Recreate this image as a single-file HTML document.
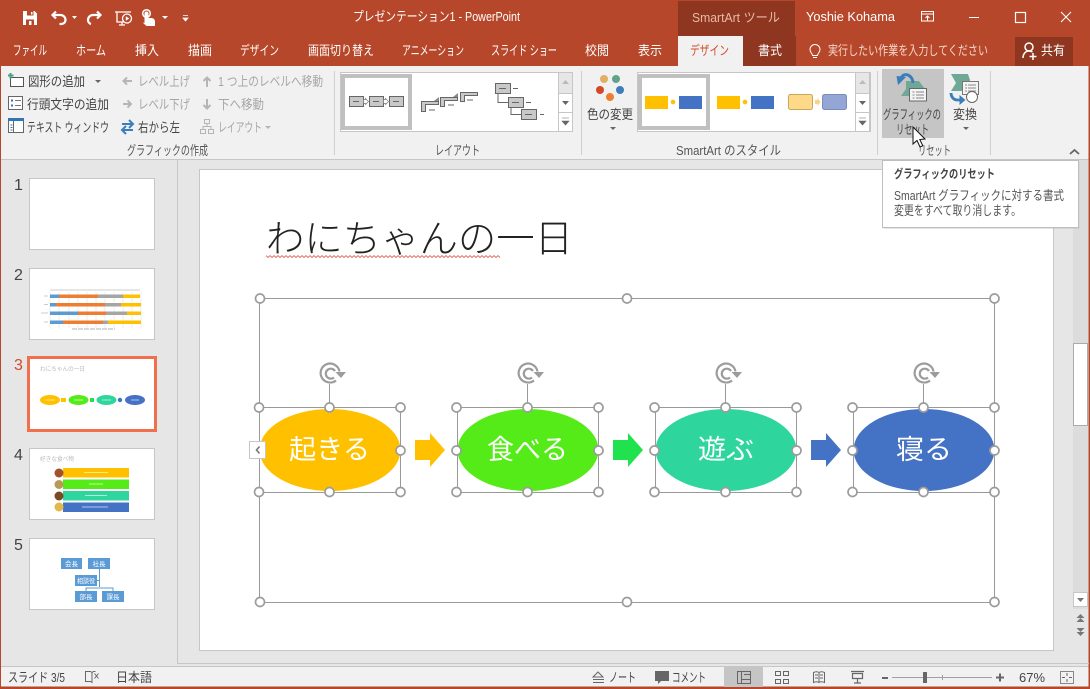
<!DOCTYPE html>
<html lang="ja"><head><meta charset="utf-8"><title>PowerPoint</title>
<style>
html,body{margin:0;padding:0;background:#E6E6E6;width:1090px;height:689px;overflow:hidden}
svg{display:block;position:absolute;left:0;top:0}
text{font-family:"Liberation Sans","Noto Sans CJK JP",sans-serif;font-size:13px;fill:#444}
.t{fill:#fff}
.d{fill:#A6A6A6}
.h{fill:none;stroke:#999;stroke-width:1}
.hd{fill:#fff;stroke:#9C9C9C;stroke-width:1.700}
.ic{fill:none;stroke:#fff;stroke-width:2}
.sl{fill:#fff;font-size:27px}
</style></head><body>
<svg width="1090" height="689" viewBox="0 0 1090 689" xmlns="http://www.w3.org/2000/svg">
<defs>
<pattern id="wavy" x="266" y="255" width="4" height="3" patternUnits="userSpaceOnUse"><path d="M0 .5L2 2.500 4 .5" fill="none" stroke="#E0504A" stroke-width=".8"/></pattern>
</defs>
<!-- window -->
<rect width="1090" height="689" fill="#B7472A"/>
<rect x="1" y="66" width="1087.500" height="94" fill="#F1F1F1"/>
<rect x="1" y="160" width="1087.500" height="506" fill="#E6E6E6"/>
<rect x="1" y="159" width="1087.500" height="1" fill="#C6C6C6"/>
<rect x="1" y="666" width="1087.500" height="20.500" fill="#F1F1F1"/>
<rect x="1" y="666" width="1087.500" height="1" fill="#C6C6C6"/>
<rect x="177" y="160" width="1" height="504" fill="#C6C6C6"/>
<rect x="177" y="663" width="912" height="1" fill="#C6C6C6"/>

<!-- title bar: quick access -->
<path d="M23 11h11.500l2.500 2.500V25H23z" fill="#fff"/>
<rect x="27" y="11" width="6.500" height="4.500" fill="#B7472A"/><rect x="31" y="12" width="1.500" height="2.500" fill="#fff"/>
<rect x="26" y="19.500" width="8" height="5.500" fill="#B7472A"/><rect x="29" y="21" width="2.500" height="4" fill="#fff"/>
<path d="M56 11.500l-3.500 3.500 3.500 3.500M52.500 15h8a5 5 0 0 1 5 5v0a4 4 0 0 1-4 4h-2" class="ic" style="stroke-width:2.200"/>
<path d="M72 16h5l-2.500 3z" fill="#fff"/>
<path d="M97 11.500l3.500 3.500-3.500 3.500M100 15h-7a5 5 0 0 0-5 5v0a4 4 0 0 0 3 4" class="ic" style="stroke-width:2.200"/>
<path d="M115 12h16M117 12v10h7M122 22v3M119 25h6" fill="none" stroke="#fff" stroke-width="1.300"/>
<circle cx="127" cy="18.500" r="4.500" fill="#B7472A" stroke="#fff" stroke-width="1.300"/>
<path d="M125.800 16.200l3.500 2.300-3.500 2.300z" fill="#fff"/>
<path d="M144.500 23v-9.500a2 2 0 0 1 4 0v4.500h3a3.500 3.500 0 0 1 3.500 3.500v4.500h-8.500l-4-3.500z" fill="#fff"/>
<circle cx="146.500" cy="13.500" r="3.800" fill="none" stroke="#fff" stroke-width="1.500"/>
<path d="M162 16h6l-3 3z" fill="#fff"/>
<path d="M183 15.500h5M183 18h5l-2.500 3z" fill="#fff" stroke="#fff" stroke-width=".8"/>
<text x="353" y="21" class="t" textLength="167" lengthAdjust="spacingAndGlyphs" style="font-size:13px">プレゼンテーション1 - PowerPoint</text>

<!-- contextual header -->
<rect x="678" y="1" width="117" height="35" fill="#8F3620"/>
<text x="692" y="22" textLength="88" lengthAdjust="spacingAndGlyphs" style="fill:#E9B9A6">SmartArt ツール</text>
<text x="806" y="21" class="t" textLength="89" lengthAdjust="spacingAndGlyphs">Yoshie Kohama</text>
<!-- window controls -->
<rect x="921.500" y="11.500" width="12" height="9.500" fill="none" stroke="#fff"/>
<path d="M921.500 14h12M927.500 20.500v-4M925.500 18l2-2 2 2" fill="none" stroke="#fff"/>
<rect x="969" y="17" width="10" height="1" fill="#fff"/>
<rect x="1015.500" y="12.500" width="10" height="10" fill="none" stroke="#fff" stroke-width="1.200"/>
<path d="M1061 12l10 10M1071 12l-10 10" fill="none" stroke="#fff" stroke-width="1.100"/>

<!-- tabs -->
<rect x="678" y="36" width="65" height="30" fill="#F1F1F1"/>
<rect x="743" y="36" width="53" height="30" fill="#8F3620"/>
<rect x="1015" y="37" width="58" height="29" fill="#8F3620"/>
<g>
<text x="13" y="55" class="t" textLength="34" lengthAdjust="spacingAndGlyphs">ファイル</text>
<text x="76" y="55" class="t" textLength="30" lengthAdjust="spacingAndGlyphs">ホーム</text>
<text x="135" y="55" class="t" textLength="24" lengthAdjust="spacingAndGlyphs">挿入</text>
<text x="188" y="55" class="t" textLength="24" lengthAdjust="spacingAndGlyphs">描画</text>
<text x="240" y="55" class="t" textLength="39" lengthAdjust="spacingAndGlyphs">デザイン</text>
<text x="308" y="55" class="t" textLength="66" lengthAdjust="spacingAndGlyphs">画面切り替え</text>
<text x="402" y="55" class="t" textLength="62" lengthAdjust="spacingAndGlyphs">アニメーション</text>
<text x="491" y="55" class="t" textLength="66" lengthAdjust="spacingAndGlyphs">スライド ショー</text>
<text x="585" y="55" class="t" textLength="24" lengthAdjust="spacingAndGlyphs">校閲</text>
<text x="638" y="55" class="t" textLength="24" lengthAdjust="spacingAndGlyphs">表示</text>
<text x="690" y="55" textLength="39" lengthAdjust="spacingAndGlyphs" style="fill:#D2492A">デザイン</text>
<text x="758" y="55" class="t" textLength="24" lengthAdjust="spacingAndGlyphs">書式</text>
<text x="828" y="55" textLength="160" lengthAdjust="spacingAndGlyphs" style="fill:#F4D7CB">実行したい作業を入力してください</text>
<text x="1041" y="55" class="t" textLength="24" lengthAdjust="spacingAndGlyphs">共有</text>
</g>
<!-- bulb -->
<path d="M812.500 55.500c0-2-2.500-3-2.500-6a5 5 0 0 1 10 0c0 3-2.500 4-2.500 6zM813 57.500h4" fill="none" stroke="#fff" stroke-width="1"/>
<!-- share icon -->
<circle cx="1029" cy="47" r="4" fill="none" stroke="#fff" stroke-width="1.500"/>
<path d="M1023 58c0-4 2.500-7 6-7 1.500 0 2.500.5 3.500 1M1033 53v7M1029.500 56.500h7" fill="none" stroke="#fff" stroke-width="1.500"/>

<!-- ribbon: group 1 -->
<rect x="10.500" y="77.500" width="13" height="9" fill="#fff" stroke="#555"/>
<path d="M10.500 73v5.500M8 75.500h5.500" stroke="#4E9E83" stroke-width="2" fill="none"/>
<text x="28" y="86" textLength="57" lengthAdjust="spacingAndGlyphs">図形の追加</text>
<path d="M95 80h6l-3 3z" fill="#666"/>
<rect x="8.500" y="96.500" width="14" height="13" fill="#fff" stroke="#666"/>
<path d="M11 100.500h2M11 105.500h2" stroke="#2E75B6" stroke-width="2"/><path d="M15 100.500h6M15 105.500h6" stroke="#777"/>
<text x="27" y="109" textLength="82" lengthAdjust="spacingAndGlyphs">行頭文字の追加</text>
<rect x="8.500" y="119.500" width="15" height="13" fill="#fff" stroke="#666"/>
<rect x="8" y="118" width="16" height="3" fill="#2E75B6"/>
<path d="M13.500 121v11" stroke="#666"/><path d="M10.500 125h2M10.500 127.500h2M10.500 130h2" stroke="#2E75B6"/>
<text x="27" y="132" textLength="82" lengthAdjust="spacingAndGlyphs">テキスト ウィンドウ</text>

<path d="M132 81h-8M127 77.500l-3.500 3.500 3.500 3.500" fill="none" stroke="#B5B5B5" stroke-width="2"/>
<text x="138" y="86" class="d" textLength="52" lengthAdjust="spacingAndGlyphs">レベル上げ</text>
<path d="M207 87v-9M203.500 81l3.500-3.500 3.500 3.500" fill="none" stroke="#B5B5B5" stroke-width="2"/>
<text x="218" y="86" class="d" textLength="105" lengthAdjust="spacingAndGlyphs">1 つ上のレベルへ移動</text>
<path d="M123 104h8M127.500 100.500l3.500 3.500-3.500 3.500" fill="none" stroke="#B5B5B5" stroke-width="2"/>
<text x="138" y="109" class="d" textLength="52" lengthAdjust="spacingAndGlyphs">レベル下げ</text>
<path d="M207 99v9M203.500 105l3.500 3.500 3.500-3.500" fill="none" stroke="#B5B5B5" stroke-width="2"/>
<text x="218" y="109" class="d" textLength="46" lengthAdjust="spacingAndGlyphs">下へ移動</text>
<path d="M122 124h11M129 120l4 4-4 4" fill="none" stroke="#3C7DBB" stroke-width="2"/>
<path d="M133 130h-11M126 126l-4 4 4 4" fill="none" stroke="#3C7DBB" stroke-width="2"/>
<text x="138" y="132" textLength="42" lengthAdjust="spacingAndGlyphs">右から左</text>
<path d="M204.500 119.500h5v4h-5zM200.500 129.500h5v4h-5zM208.500 129.500h5v4h-5zM207 123.500v3M203 129.500v-3h8v3" fill="none" stroke="#B5B5B5"/>
<text x="218" y="132" class="d" textLength="44" lengthAdjust="spacingAndGlyphs">レイアウト</text>
<path d="M265 126h6l-3 3z" fill="#B5B5B5"/>
<text x="127" y="155" textLength="81" lengthAdjust="spacingAndGlyphs" style="fill:#555">グラフィックの作成</text>
<rect x="334" y="71" width="1" height="84" fill="#D0D0D0"/>

<!-- layout gallery -->
<rect x="340.500" y="72.500" width="232" height="59" fill="#fff" stroke="#C6C6C6"/>
<rect x="343" y="76" width="67" height="52" fill="#fff" stroke="#C0C0C0" stroke-width="4"/>
<g fill="#C8C8C8" stroke="#666">
<rect x="349.500" y="96.500" width="14" height="10"/><rect x="369.500" y="96.500" width="14" height="10"/><rect x="389.500" y="96.500" width="14" height="10"/>
</g>
<path d="M353 101.500h6M373 101.500h6M393 101.500h6" stroke="#666"/>
<path d="M363.500 99.500h2v-1l3 3-3 3v-1h-2zM383.500 99.500h2v-1l3 3-3 3v-1h-2z" fill="#fff" stroke="#777" stroke-width=".7"/>
<path d="M421.500 101.500h17v3h-13v7h-4zM440.500 97.500h17v3h-13v6h-4zM460.500 92.500h17v3h-13v6h-4z" fill="#C8C8C8" stroke="#666"/>
<path d="M429 110h6M448 105h6M467 100h6" stroke="#666"/>
<path d="M434 101l5-4v4zM453 97l5-4v4z" fill="#888"/>
<g fill="#C8C8C8" stroke="#666">
<rect x="495.500" y="83.500" width="15" height="10"/><rect x="508.500" y="97.500" width="15" height="10"/><rect x="521.500" y="109.500" width="15" height="10"/>
</g>
<path d="M499 88.500h7M512 102.500h7M525 114.500h7M513 88.500h5M526 102.500h5M540 114.500h4M498 93.500v9h10M511 107.500v7h10" stroke="#666" fill="none"/>
<path d="M558.500 72.500h14v59h-14zM558.500 93.500h14M558.500 112.500h14" fill="#fff" stroke="#C6C6C6"/>
<rect x="559" y="73" width="13" height="20" fill="#E6E6E6"/>
<path d="M562 84l3.500-4 3.500 4z" fill="#BBB"/>
<path d="M562 101h7l-3.500 4z" fill="#666"/>
<path d="M562 118h7M562 121h7l-3.500 4z" fill="#666" stroke="#666" stroke-width=".6"/>
<text x="435" y="155" textLength="45" lengthAdjust="spacingAndGlyphs" style="fill:#555">レイアウト</text>
<rect x="581" y="71" width="1" height="84" fill="#D0D0D0"/>

<!-- colour change -->
<circle cx="604" cy="79" r="4" fill="#E3AE63"/><circle cx="616" cy="79" r="4" fill="#5FA48A"/>
<circle cx="600" cy="90" r="4" fill="#D2492A"/><circle cx="620" cy="90" r="4" fill="#3C7DBB"/><circle cx="610" cy="97" r="4" fill="#ED7D31"/>
<text x="587" y="119" textLength="46" lengthAdjust="spacingAndGlyphs">色の変更</text>
<path d="M610 127h6l-3 3z" fill="#666"/>

<!-- style gallery -->
<rect x="637.500" y="72.500" width="233" height="59" fill="#fff" stroke="#C6C6C6"/>
<rect x="640" y="76" width="68" height="52" fill="#fff" stroke="#C0C0C0" stroke-width="4"/>
<rect x="645" y="96" width="23" height="13" fill="#FFC000"/><circle cx="673" cy="102" r="2.300" fill="#FFC000"/><rect x="679" y="96" width="23" height="13" fill="#4472C4"/>
<rect x="717" y="96" width="23" height="13" fill="#FFC000"/><circle cx="745" cy="102" r="2.300" fill="#FFC000"/><rect x="751" y="96" width="23" height="13" fill="#4472C4"/>
<rect x="788.500" y="94.500" width="24" height="15" rx="2" fill="#FFD98A" stroke="#C9A65A"/><path d="M815 100h2.500v-2l3 4-3 4v-2H815z" fill="#F8D18A"/><rect x="822.500" y="94.500" width="24" height="15" rx="2" fill="#93A6D6" stroke="#7C8DB8"/>
<path d="M855.500 72.500h14v59h-14zM855.500 93.500h14M855.500 112.500h14" fill="#fff" stroke="#C6C6C6"/>
<rect x="856" y="73" width="13" height="20" fill="#E6E6E6"/>
<path d="M859 84l3.500-4 3.500 4z" fill="#BBB"/>
<path d="M859 101h7l-3.500 4z" fill="#666"/>
<path d="M859 118h7M859 121h7l-3.500 4z" fill="#666" stroke="#666" stroke-width=".6"/>
<text x="676" y="155" textLength="105" lengthAdjust="spacingAndGlyphs" style="fill:#555">SmartArt のスタイル</text>
<rect x="877" y="71" width="1" height="84" fill="#D0D0D0"/>

<!-- reset -->
<rect x="882" y="69" width="62" height="69" fill="#C5C5C5"/>
<path d="M906 81h13l6 8v7h-24l5-7z" fill="#6FA897"/>
<path d="M913 83C913 76 905 71 901 78" fill="none" stroke="#3C7DBB" stroke-width="3"/>
<path d="M896.500 76l9.500 1-8 8z" fill="#3C7DBB"/>
<rect x="909.500" y="88.500" width="17" height="12.500" fill="#F4F4F4" stroke="#666"/>
<path d="M912.500 92h2M916 92h8M912.500 95h2M916 95h8M912.500 98h2M916 98h8" stroke="#888"/>
<text x="883" y="119" textLength="58" lengthAdjust="spacingAndGlyphs">グラフィックの</text>
<text x="896" y="134" textLength="33" lengthAdjust="spacingAndGlyphs">リセット</text>
<path d="M951 74h17l2 6v11h-19l5-8z" fill="#6FA897"/>
<rect x="962.500" y="81.500" width="16" height="13" fill="#F4F4F4" stroke="#777"/>
<path d="M965 85h2M968 85h8M965 88h2M968 88h8M965 91h2M968 91h8" stroke="#888"/>
<path d="M951 93a6 7 0 0 0 6 7h5" fill="none" stroke="#3C7DBB" stroke-width="2.800"/>
<path d="M959.500 95l6 5-6 5z" fill="#3C7DBB"/>
<circle cx="972" cy="97" r="5.500" fill="#fff" stroke="#666"/>
<text x="953" y="119" textLength="24" lengthAdjust="spacingAndGlyphs">変換</text>
<path d="M963 127h6l-3 3z" fill="#666"/>
<text x="918" y="155" textLength="33" lengthAdjust="spacingAndGlyphs" style="fill:#555">リセット</text>
<rect x="990" y="71" width="1" height="84" fill="#D0D0D0"/>
<path d="M1070 154l4.500-4 4.500 4" fill="none" stroke="#666" stroke-width="1.800"/>

<!-- thumbnails -->
<text x="14" y="190" style="font-size:16px">1</text>
<text x="14" y="280" style="font-size:16px">2</text>
<text x="14" y="370" style="font-size:16px;fill:#D2492A">3</text>
<text x="14" y="460" style="font-size:16px">4</text>
<text x="14" y="550" style="font-size:16px">5</text>
<rect x="29.500" y="178.500" width="125" height="71" fill="#fff" stroke="#C6C6C6"/>
<rect x="29.500" y="268.500" width="125" height="71" fill="#fff" stroke="#C6C6C6"/>
<path d="M50 292v36M59 292v36M69 292v36M78 292v36M87 292v36M96 292v36M105 292v36M114 292v36M123 292v36M132 292v36M141 292v36" stroke="#DDD" stroke-width=".5"/>
<rect x="50" y="294.500" width="9" height="3.500" fill="#5B9BD5"/><rect x="59" y="294.500" width="39" height="3.500" fill="#ED7D31"/><rect x="98" y="294.500" width="25" height="3.500" fill="#A5A5A5"/><rect x="123" y="294.500" width="17" height="3.500" fill="#FFC000"/>
<rect x="50" y="303" width="6" height="3.500" fill="#5B9BD5"/><rect x="56" y="303" width="49" height="3.500" fill="#ED7D31"/><rect x="105" y="303" width="16" height="3.500" fill="#A5A5A5"/><rect x="121" y="303" width="20" height="3.500" fill="#FFC000"/>
<rect x="50" y="311.500" width="28" height="3.500" fill="#5B9BD5"/><rect x="78" y="311.500" width="28" height="3.500" fill="#ED7D31"/><rect x="106" y="311.500" width="21" height="3.500" fill="#A5A5A5"/><rect x="127" y="311.500" width="14" height="3.500" fill="#FFC000"/>
<rect x="50" y="320.500" width="13" height="3.500" fill="#5B9BD5"/><rect x="63" y="320.500" width="40" height="3.500" fill="#ED7D31"/><rect x="103" y="320.500" width="5" height="3.500" fill="#A5A5A5"/><rect x="108" y="320.500" width="33" height="3.500" fill="#FFC000"/>
<path d="M72 329h43" stroke="#CCC" stroke-width="1.500" stroke-dasharray="5 1"/>
<path d="M44 296h4M44 304.500h4M41 313h7M44 322h4M50 290h90" stroke="#CCC" stroke-width="1"/>

<rect x="28.500" y="357.500" width="127" height="73" fill="#fff" stroke="#F0704E" stroke-width="3"/>
<text x="40" y="371" textLength="45" lengthAdjust="spacingAndGlyphs" style="font-size:6px;fill:#BBB">わにちゃんの一日</text>
<ellipse cx="50" cy="400" rx="10" ry="5" fill="#FFC000"/><rect x="61" y="398" width="5" height="4" fill="#FFC000"/>
<ellipse cx="78.500" cy="400" rx="10" ry="5" fill="#55EB18"/><rect x="90" y="398" width="4" height="4" fill="#1FE24E"/>
<ellipse cx="106.500" cy="400" rx="10" ry="5" fill="#2ED69E"/><circle cx="120" cy="400" r="2.200" fill="#4472C4"/>
<ellipse cx="135" cy="400" rx="10" ry="5" fill="#4472C4"/>
<path d="M45 400h10M74 400h9M102 400h9M131 400h8" stroke="#fff" stroke-width="1" opacity=".6"/>

<rect x="29.500" y="448.500" width="125" height="71" fill="#fff" stroke="#C6C6C6"/>
<text x="40" y="461" textLength="34" lengthAdjust="spacingAndGlyphs" style="font-size:6px;fill:#BBB">好きな食べ物</text>
<rect x="63" y="468" width="66" height="9.500" fill="#FFC000"/><rect x="63" y="479.500" width="66" height="9.500" fill="#55EB18"/><rect x="63" y="491" width="66" height="9.500" fill="#2ED69E"/><rect x="63" y="502.500" width="66" height="9.500" fill="#4472C4"/>
<circle cx="59" cy="473" r="4.500" fill="#A0522D"/><circle cx="59" cy="484.500" r="4.500" fill="#B79A5A"/><circle cx="59" cy="496" r="4.500" fill="#7A4A22"/><circle cx="59" cy="507" r="4.500" fill="#E0B94A"/>
<path d="M84 472.500h24M89 484h14M85 495.500h22M82 507h26" stroke="#fff" stroke-width="1" opacity=".6"/>

<rect x="29.500" y="538.500" width="125" height="71" fill="#fff" stroke="#C6C6C6"/>
<rect x="61" y="558" width="21" height="11" fill="#5B9BD5"/><rect x="88" y="558" width="22" height="11" fill="#5B9BD5"/><rect x="75" y="575" width="22" height="11" fill="#5B9BD5"/><rect x="75" y="591" width="22" height="11" fill="#5B9BD5"/><rect x="102" y="591" width="22" height="11" fill="#5B9BD5"/>
<path d="M99.500 569v18M97 580.500h2M86 591v-3h27v3" fill="none" stroke="#5B9BD5"/>
<text x="65" y="566" textLength="13" lengthAdjust="spacingAndGlyphs" style="font-size:6.500px;fill:#fff">会長</text>
<text x="92.500" y="566" textLength="13" lengthAdjust="spacingAndGlyphs" style="font-size:6.500px;fill:#fff">社長</text>
<text x="77" y="583" textLength="18" lengthAdjust="spacingAndGlyphs" style="font-size:6.500px;fill:#fff">相談役</text>
<text x="79.500" y="599" textLength="13" lengthAdjust="spacingAndGlyphs" style="font-size:6.500px;fill:#fff">部長</text>
<text x="106.500" y="599" textLength="13" lengthAdjust="spacingAndGlyphs" style="font-size:6.500px;fill:#fff">課長</text>

<!-- slide -->
<rect x="199.500" y="169.500" width="854" height="481" fill="#fff" stroke="#C6C6C6"/>
<text x="266" y="252" textLength="307" lengthAdjust="spacingAndGlyphs" style="font-size:38px;fill:#222;font-weight:300">わにちゃんの一日</text>
<rect x="266" y="255" width="234" height="3" fill="url(#wavy)"/>

<!-- smartart frame -->
<rect x="259.500" y="298.500" width="735" height="304" class="h"/>
<!-- shapes -->
<ellipse cx="330" cy="450" rx="70.500" ry="41" fill="#FFC000"/>
<ellipse cx="528" cy="450" rx="70.500" ry="41" fill="#55EB18"/>
<ellipse cx="726" cy="450" rx="70.500" ry="41" fill="#2ED69E"/>
<ellipse cx="924" cy="450" rx="70.500" ry="41" fill="#4472C4"/>
<path d="M415 440h15v-7l15 17-15 17v-7h-15z" fill="#FFC000"/>
<path d="M613 440h15v-7l15 17-15 17v-7h-15z" fill="#1FE24E"/>
<path d="M811 440h15v-7l15 17-15 17v-7h-15z" fill="#4472C4"/>
<text x="289" y="459" class="sl" textLength="81" lengthAdjust="spacingAndGlyphs">起きる</text>
<text x="487" y="459" class="sl" textLength="81" lengthAdjust="spacingAndGlyphs">食べる</text>
<text x="698" y="459" class="sl" textLength="56" lengthAdjust="spacingAndGlyphs">遊ぶ</text>
<text x="896" y="459" class="sl" textLength="56" lengthAdjust="spacingAndGlyphs">寝る</text>
<!-- selection boxes -->
<rect x="259.500" y="407.500" width="141" height="85" class="h"/>
<rect x="457.500" y="407.500" width="141" height="85" class="h"/>
<rect x="655.500" y="407.500" width="141" height="85" class="h"/>
<rect x="853.500" y="407.500" width="141" height="85" class="h"/>
<path d="M329.500 384v23M527.500 384v23M725.500 384v23M923.500 384v23" stroke="#999" stroke-width="1"/>
<!-- rotate handles -->
<g fill="none" stroke="#9C9C9C" stroke-width="2.200">
<path d="M336 380.500A9.500 9.500 0 1 1 339.500 371.500"/><path d="M334 377.500A5 5 0 1 1 335 371"/>
<path d="M534 380.500A9.500 9.500 0 1 1 537.500 371.500"/><path d="M532 377.500A5 5 0 1 1 533 371"/>
<path d="M732 380.500A9.500 9.500 0 1 1 735.500 371.500"/><path d="M730 377.500A5 5 0 1 1 731 371"/>
<path d="M930 380.500A9.500 9.500 0 1 1 933.500 371.500"/><path d="M928 377.500A5 5 0 1 1 929 371"/>
</g>
<path d="M335.500 372h10.500l-5 6zM533.500 372h10.500l-5 6zM731.500 372h10.500l-5 6zM929.500 372h10.500l-5 6z" fill="#9C9C9C"/>
<!-- handles -->
<g class="hd">
<circle cx="260" cy="298.500" r="4.500"/><circle cx="627" cy="298.500" r="4.500"/><circle cx="994.500" cy="298.500" r="4.500"/>
<circle cx="260" cy="602" r="4.500"/><circle cx="627" cy="602" r="4.500"/><circle cx="994.500" cy="602" r="4.500"/>
<circle cx="259" cy="407.500" r="4.500"/><circle cx="329.500" cy="407.500" r="4.500"/><circle cx="400.500" cy="407.500" r="4.500"/>
<circle cx="400.500" cy="450.500" r="4.500"/>
<circle cx="259" cy="492" r="4.500"/><circle cx="329.500" cy="492" r="4.500"/><circle cx="400.500" cy="492" r="4.500"/>
<circle cx="456.500" cy="407.500" r="4.500"/><circle cx="527.500" cy="407.500" r="4.500"/><circle cx="598.500" cy="407.500" r="4.500"/>
<circle cx="456.500" cy="450.500" r="4.500"/><circle cx="598.500" cy="450.500" r="4.500"/>
<circle cx="456.500" cy="492" r="4.500"/><circle cx="527.500" cy="492" r="4.500"/><circle cx="598.500" cy="492" r="4.500"/>
<circle cx="654.500" cy="407.500" r="4.500"/><circle cx="725.500" cy="407.500" r="4.500"/><circle cx="796.500" cy="407.500" r="4.500"/>
<circle cx="654.500" cy="450.500" r="4.500"/><circle cx="796.500" cy="450.500" r="4.500"/>
<circle cx="654.500" cy="492" r="4.500"/><circle cx="725.500" cy="492" r="4.500"/><circle cx="796.500" cy="492" r="4.500"/>
<circle cx="852.500" cy="407.500" r="4.500"/><circle cx="923.500" cy="407.500" r="4.500"/><circle cx="994.500" cy="407.500" r="4.500"/>
<circle cx="852.500" cy="450.500" r="4.500"/><circle cx="994.500" cy="450.500" r="4.500"/>
<circle cx="852.500" cy="492" r="4.500"/><circle cx="923.500" cy="492" r="4.500"/><circle cx="994.500" cy="492" r="4.500"/>
</g>
<!-- text pane tab -->
<rect x="249.500" y="441.500" width="16" height="17" fill="#fff" stroke="#C6C6C6"/>
<path d="M259.500 446.500l-3 3.500 3 3.500" fill="none" stroke="#777" stroke-width="1.600"/>

<!-- scrollbar -->
<rect x="1073" y="160" width="15" height="449" fill="#DCDCDC"/>
<rect x="1073.500" y="343.500" width="14" height="82" fill="#fff" stroke="#ABABAB"/>
<rect x="1073.500" y="592.500" width="14" height="14" fill="#fff" stroke="#C6C6C6"/>
<path d="M1077 598h7l-3.500 4z" fill="#777"/>
<path d="M1076.500 618l4-4 4 4zM1076.500 622l4-4 4 4z" fill="#777"/>
<path d="M1076.500 628l4 4 4-4zM1076.500 632l4 4 4-4z" fill="#777"/>

<!-- tooltip -->
<rect x="883.500" y="161.500" width="196" height="67.500" fill="#BBB" opacity=".4"/>
<rect x="882.500" y="160.500" width="196" height="67" fill="#fff" stroke="#BEBEBE"/>
<text x="894" y="178" textLength="101" lengthAdjust="spacingAndGlyphs" style="font-weight:700;font-size:12px;fill:#444">グラフィックのリセット</text>
<text x="894" y="200" textLength="170" lengthAdjust="spacingAndGlyphs" style="fill:#555">SmartArt グラフィックに対する書式</text>
<text x="894" y="215" textLength="127" lengthAdjust="spacingAndGlyphs" style="fill:#555">変更をすべて取り消します。</text>

<!-- cursor -->
<path d="M913 127v17l4-3.500 3 6.500 2.800-1.300-3-6.200 5.200-.5z" fill="#fff" stroke="#111" stroke-width="1"/>

<!-- status bar -->
<text x="8" y="682" textLength="57" lengthAdjust="spacingAndGlyphs">スライド 3/5</text>
<path d="M85.500 671.500h5l1.500 1v10l-1.500-1h-5zM92 672.500l1.500-1h2M92 682.500v-3" fill="none" stroke="#666"/>
<path d="M94.500 673.500l4 5M98.500 673.500l-4 5" stroke="#666" fill="none"/>
<text x="116" y="682" textLength="36" lengthAdjust="spacingAndGlyphs">日本語</text>
<path d="M593 677l5-5 5 5zM593 679.500h11M593 682.500h11" fill="none" stroke="#666"/>
<text x="609" y="682" textLength="27" lengthAdjust="spacingAndGlyphs">ノート</text>
<path d="M655 671h14v10h-8l-3 3v-3h-3z" fill="#666"/>
<text x="672" y="682" textLength="34" lengthAdjust="spacingAndGlyphs">コメント</text>
<rect x="724" y="667" width="39" height="20" fill="#C5C5C5"/>
<path d="M737.500 671.500h13v12h-13zM741.500 671.500v12M741.500 679.500h9M744 674.500h6" fill="none" stroke="#666"/>
<path d="M775.500 671.500h5v4h-5zM783.500 671.500h5v4h-5zM775.500 679.500h5v4h-5zM783.500 679.500h5v4h-5z" fill="none" stroke="#666"/>
<path d="M813.500 672.500c2-1 4-1 5.500 0 1.500-1 3.500-1 5.500 0v10c-2-1-4-1-5.500 0-1.500-1-3.500-1-5.500 0zM819 672.500v10M815 675h3M815 678h3M820 675h3M820 678h3" fill="none" stroke="#666"/>
<path d="M851 671.500h13M852.500 673.500h10v5h-10zM857.500 678.500v4M854 683h7" fill="none" stroke="#666" stroke-width="1.200"/>
<rect x="882" y="677" width="6" height="2" fill="#666"/>
<rect x="892" y="677" width="100" height="1" fill="#A0A0A0"/>
<rect x="942" y="675" width="1" height="5" fill="#A0A0A0"/>
<rect x="923" y="672" width="4" height="11" fill="#666"/>
<path d="M996 677.500h8M1000 673.500v8" stroke="#666" stroke-width="2"/>
<text x="1019" y="682" textLength="26" lengthAdjust="spacingAndGlyphs">67%</text>
<rect x="1060.500" y="671.500" width="13" height="12" fill="none" stroke="#888"/>
<path d="M1067 673v3M1067 679v3M1062 677.500h3M1069 677.500h3" stroke="#666"/>
</svg>
</body></html>
